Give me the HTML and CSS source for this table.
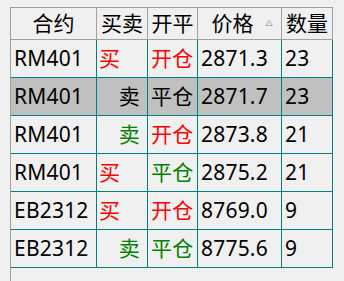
FILE: index.html
```html
<!DOCTYPE html>
<html>
<head>
<meta charset="utf-8">
<link rel="stylesheet" href="styles.css">
</head>
<body>
<div class="view">
  <div class="grid">
    <div class="hd">合约</div>
    <div class="hd">买卖</div>
    <div class="hd">开平</div>
    <div class="hd sort">价格<svg class="arrow" width="8" height="6" viewBox="0 0 8 6"><path d="M0.5 5.5 L4 0.5 L7.5 5.5 Z" fill="#e8e8e8" stroke="#b0b0b0" stroke-width="1"/></svg></div>
    <div class="hd">数量</div>

    <div class="c">RM401</div><div class="c buy">买</div><div class="c red">开仓</div><div class="c">2871.3</div><div class="c">23</div>
    <div class="c sel">RM401</div><div class="c sel sell">卖</div><div class="c sel">平仓</div><div class="c sel">2871.7</div><div class="c sel">23</div>
    <div class="c">RM401</div><div class="c sell">卖</div><div class="c red">开仓</div><div class="c">2873.8</div><div class="c">21</div>
    <div class="c">RM401</div><div class="c buy">买</div><div class="c green">平仓</div><div class="c">2875.2</div><div class="c">21</div>
    <div class="c">EB2312</div><div class="c buy">买</div><div class="c red">开仓</div><div class="c">8769.0</div><div class="c">9</div>
    <div class="c">EB2312</div><div class="c sell">卖</div><div class="c green">平仓</div><div class="c">8775.6</div><div class="c">9</div>
  </div>
</div>
</body>
</html>
```
FILE: styles.css
```css
html, body {
  margin: 0;
  padding: 0;
  background: #f0f0f0;
  overflow: hidden;
}
body {
  width: 344px;
  height: 281px;
  font-family: "Noto Sans", "Noto Sans CJK SC", sans-serif;
  font-size: 21px;
  color: #000;
}
.view {
  margin-left: 10px;
  margin-top: 7px;
  height: 274px;
  width: fit-content;
  border-left: 1px solid #a0a0a0;
  border-top: 1px solid #a0a0a0;
  box-sizing: border-box;
}
.grid {
  display: grid;
  grid-template-columns: 86px 51px 50px 84px 51px;
  grid-template-rows: 32px repeat(6, 38px);
}
.hd {
  display: flex;
  align-items: center;
  justify-content: center;
  border-right: 1px solid #a0a0a0;
  border-bottom: 1px solid #a0a0a0;
  box-sizing: border-box;
  line-height: 1;
  padding-bottom: 1px;
}
.hd.sort {
  position: relative;
  padding-right: 14px;
}
.arrow {
  position: absolute;
  right: 8px;
  top: 12px;
}
.c {
  display: flex;
  align-items: center;
  padding: 0 3px 1px 3px;
  border-right: 1px solid #008080;
  border-bottom: 1px solid #008080;
  box-sizing: border-box;
  line-height: 1;
  white-space: nowrap;
  letter-spacing: 0.2px;
}
.sel { background: #c0c0c0; }
.buy { color: #ff0000; padding-left: 2px; }
.sell { color: #008000; justify-content: flex-end; padding-right: 7px; }
.sel.sell { color: #000; }
.red { color: #ff0000; }
.green { color: #008000; }
```
